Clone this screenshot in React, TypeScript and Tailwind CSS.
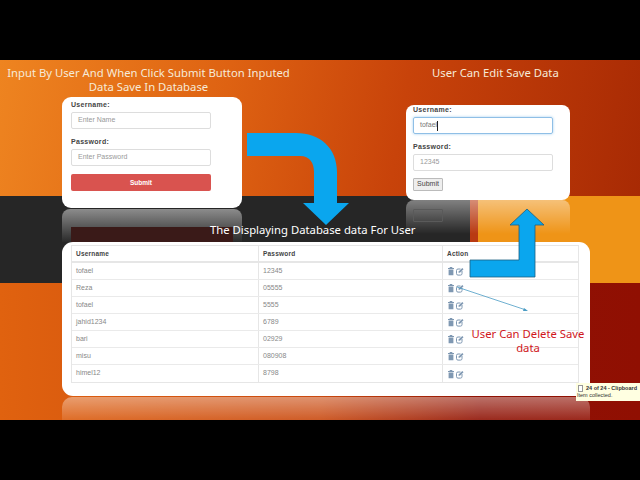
const rows: [string, string][] = [
  ["tofael", "12345"],
  ["Reza", "05555"],
  ["tofael", "5555"],
  ["jahid1234", "6789"],
  ["bari", "02929"],
  ["misu", "080908"],
  ["himel12", "8798"],
];

function TrashEdit() {
  return (
    <svg width="17" height="10" viewBox="0 0 17 10" className="block">
      <path d="M1 2h6v1H1z M2.700 1h2.600v1H2.700z M1.600 3.400h4.800v5.800H1.600z" fill="#7f98b2" />
      <path d="M15 5v2.600a1.500 1.500 0 0 1-1.500 1.500H11a1.500 1.500 0 0 1-1.500-1.500V4.500A1.500 1.500 0 0 1 11 3h2.500" fill="none" stroke="#7f98b2" strokeWidth="1" />
      <path d="M11.500 7l.4-1.700L15.300 2l1.200 1.200-3.300 3.400z" fill="#7f98b2" />
    </svg>
  );
}

function LoginField({ label, value, placeholder, focused }: { label: string; value?: string; placeholder?: string; focused?: boolean }) {
  return (
    <div className="w-[140px]">
      <div className="text-[7px] leading-[11px] font-bold text-[#444] tracking-[0.3px]">{label}</div>
      <div
        className={`mt-[2px] h-[17px] rounded-[2px] border flex items-center pl-[6px] text-[7px] ${
          focused ? "border-[#8fbfe6] shadow-[0_0_3px_#a5cff0] text-[#777]" : "border-[#ddd] text-[#999]"
        }`}
      >
        {value ?? placeholder}
        {focused && <span className="w-px h-[10px] bg-[#222]" />}
      </div>
    </div>
  );
}

const titleFont = "font-['Noto_Sans',sans-serif] text-[11.300px] leading-[14px] whitespace-nowrap";

export default function App() {
  return (
    <div className="w-[640px] h-[480px] bg-black overflow-hidden font-['Liberation_Sans',sans-serif]">
      <div className="h-[60px]" />
      <div className="relative w-[640px] h-[360px] overflow-hidden flex flex-col">
        {/* backdrop bands */}
        <div className="h-[136px] bg-[linear-gradient(100deg,#ee8420_0%,#de6212_35%,#c8430a_62%,#a82a04_100%)]" />
        <div className="h-[87px] flex">
          <div className="w-[470px] bg-[#262626]" />
          <div className="w-[8px] bg-[#b93a12]" />
          <div className="flex-1 bg-[#ef9417]" />
        </div>
        <div className="flex-1 bg-[linear-gradient(90deg,#e0620f_0%,#c9490f_50%,#8f1204_75%,#900f02_100%)]" />

        {/* slide content */}
        <div className="absolute inset-0 flex flex-col">
          <div className="h-[182px] flex">
            <div className="w-[297px] flex flex-col pt-[6px]">
              <div className={`${titleFont} text-center text-[#f6ead8]`}>
                Input By User And When Click Submit Button Inputed
                <br />
                Data Save In Database
              </div>
              <div className="ml-[62px] mt-[3px] w-[180px] h-[111px] bg-white rounded-[9px] px-[9px] pt-[2px] flex flex-col gap-[7px]">
                <LoginField label="Username:" placeholder="Enter Name" />
                <LoginField label="Password:" placeholder="Enter Password" />
                <div className="mt-[1px] w-[140px] h-[17px] rounded-[2px] bg-[#d9534f] text-white text-[6.500px] font-bold flex items-center justify-center">
                  Submit
                </div>
              </div>
              <div className="ml-[62px] mt-[1px] w-[180px] h-[33px] rounded-t-[8px] bg-[linear-gradient(180deg,#8c8c8c,#2a2a2a)] px-[9px] pt-[18px]">
                <div className="h-[15px] bg-[#3a1a18]" />
              </div>
            </div>
            <div className="ml-[109px] w-[164px] flex flex-col pt-[6px]">
              <div className={`${titleFont} pl-[26px] text-[#f6ead8]`}>User Can Edit Save Data</div>
              <div className="mt-[25px] h-[95px] bg-white rounded-[8px] px-[7px] flex flex-col gap-[7px]">
                <div className="-mt-[1px]">
                  <LoginField label="Username:" value="tofael" focused />
                </div>
                <LoginField label="Password:" value="12345" />
                <div className="w-[30px] h-[13px] rounded-[1px] bg-[#eee] border border-[#bbb] text-[#444] text-[7px] flex items-center justify-center">
                  Submit
                </div>
              </div>
              <div className="h-[34px] rounded-t-[8px] bg-[linear-gradient(180deg,rgba(255,255,255,0.42),rgba(255,255,255,0))] pl-[7px] pt-[9px]">
                <div className="w-[30px] h-[13px] border border-[#5a5a5a] rounded-[1px]" />
              </div>
            </div>
          </div>

          {/* table card */}
          <div className="ml-[62px] w-[528px] h-[154px] bg-white rounded-[11px] pl-[9px] pt-[3px]">
            <div className="w-[508px] border border-[#e6e6e6]">
              <div className="grid grid-cols-[186px_184px_1fr] h-[17px] border-b-2 border-[#e6e6e6] text-[6.500px] font-bold text-[#444] tracking-[0.2px]">
                <div className="pl-[4px] flex items-center">Username</div>
                <div className="pl-[4px] flex items-center border-l border-[#e6e6e6]">Password</div>
                <div className="pl-[4px] flex items-center border-l border-[#e6e6e6]">Action</div>
              </div>
              {rows.map(([u, p], i) => (
                <div key={i} className={`grid grid-cols-[186px_184px_1fr] h-[17px] text-[7px] text-[#888] ${i < 6 ? "border-b border-[#eaeaea]" : ""}`}>
                  <div className="pl-[4px] flex items-center">{u}</div>
                  <div className="pl-[4px] flex items-center border-l border-[#e6e6e6]">{p}</div>
                  <div className="pl-[4px] flex items-center border-l border-[#e6e6e6]">
                    <TrashEdit />
                  </div>
                </div>
              ))}
            </div>
          </div>
          <div className="ml-[62px] mt-[1px] w-[528px] flex-1 rounded-t-[10px] bg-[linear-gradient(180deg,rgba(255,255,255,0.4),rgba(255,255,255,0.1))]" />
        </div>

        {/* arrows drawn over the slide */}
        <svg className="absolute left-0 top-0" width="640" height="360" viewBox="0 0 640 360">
          <path d="M247 73H296C320 73 337 88 337 112V143H349L326 165L303 143H314V112C314 103 310 96 300 96H247Z" fill="#0aa6ee" />
          <path d="M527 149L544 165H535V217H470V200H519V165H510Z" fill="#0aa6ee" stroke="#1c5f80" strokeWidth="0.8" />
          <path d="M457 227L526 250" stroke="#4a9cc4" strokeWidth="0.8" fill="none" />
          <path d="M528 251L523 251L524 248Z" fill="#4a9cc4" />
        </svg>

        {/* overlaid captions */}
        <div className={`absolute left-[210px] top-[163px] ${titleFont} text-white`}>
          The Displaying Database data For User
        </div>
        <div className={`absolute left-[468px] top-[267px] w-[120px] text-center text-[#d0161c] ${titleFont}`}>
          User Can Delete Save
          <br />
          data
        </div>

        {/* clipboard tooltip */}
        <div className="absolute left-[576px] top-[323px] w-[64px] h-[18px] bg-[#ffffe1] text-[5.500px] leading-[7px] text-[#333] pl-[1px] pt-[2px]">
          <div className="font-bold whitespace-nowrap flex items-center gap-[3px]">
            <span className="ml-[1px] inline-block w-[5px] h-[7px] border border-[#999] bg-white" />
            24 of 24 - Clipboard
          </div>
          <div className="whitespace-nowrap">Item collected.</div>
        </div>
      </div>
    </div>
  );
}
